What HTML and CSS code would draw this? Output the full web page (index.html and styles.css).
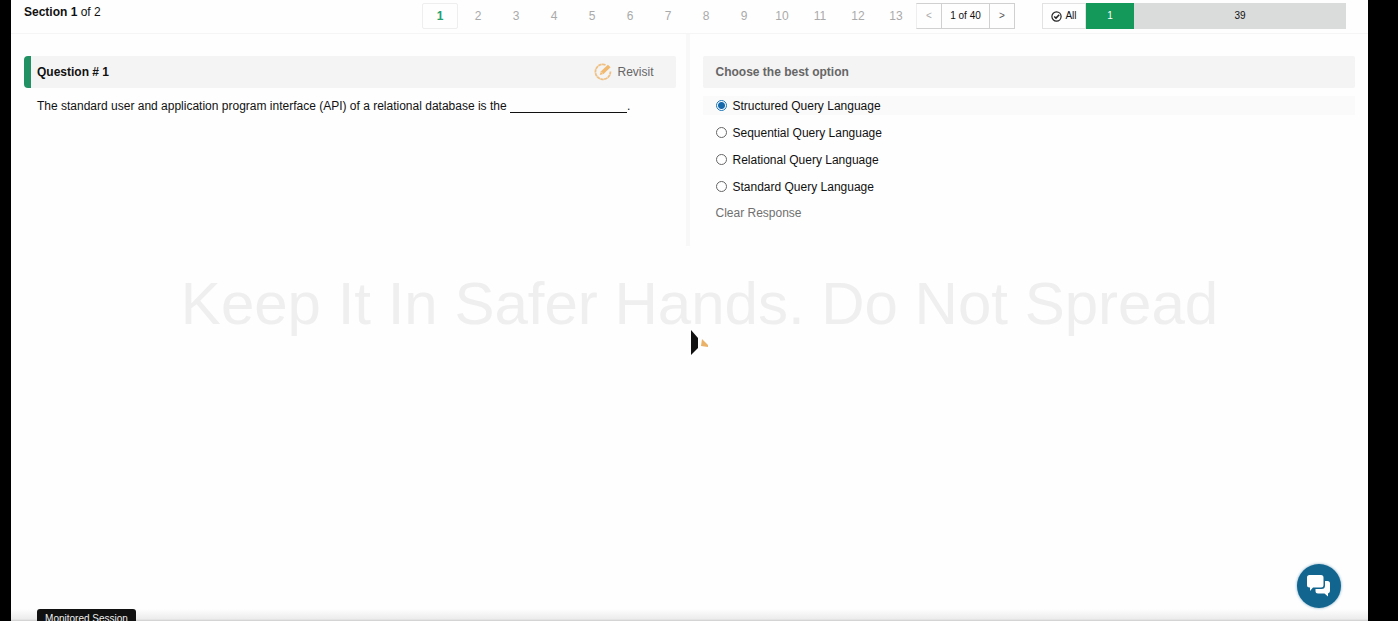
FILE: index.html
```html
<!DOCTYPE html>
<html lang="en">
<head>
<meta charset="utf-8">
<meta name="viewport" content="width=device-width, initial-scale=1">
<title>Section 1 of 2</title>
<link rel="stylesheet" href="styles.css">
</head>
<body>
<div class="page">
  <header class="topbar">
    <div class="section-name"><strong>Section 1</strong> of 2</div>
    <nav class="numbers" aria-label="Questions">
      <button class="number current" type="button">1</button>
      <button class="number" type="button">2</button>
      <button class="number" type="button">3</button>
      <button class="number" type="button">4</button>
      <button class="number" type="button">5</button>
      <button class="number" type="button">6</button>
      <button class="number" type="button">7</button>
      <button class="number" type="button">8</button>
      <button class="number" type="button">9</button>
      <button class="number" type="button">10</button>
      <button class="number" type="button">11</button>
      <button class="number" type="button">12</button>
      <button class="number" type="button">13</button>
    </nav>
    <div class="pager">
      <button class="step step-prev" type="button" aria-label="Previous">&lt;</button>
      <span class="position">1 of 40</span>
      <button class="step step-next" type="button" aria-label="Next">&gt;</button>
    </div>
    <div class="filters">
      <button class="filter filter-all" type="button">
        <svg width="11" height="11" viewBox="0 0 11 11" fill="none" stroke="#222" aria-hidden="true"><circle cx="5.5" cy="5.5" r="4.6" stroke-width="1.2"/><path d="M3.2 5.5 5 7.1 8.2 3.8" stroke-width="1.5"/></svg>
        All
      </button>
      <button class="filter filter-done" type="button">1</button>
      <button class="filter filter-left" type="button">39</button>
    </div>
  </header>

  <main class="columns">
    <section class="question">
      <div class="bar question-bar">
        <h2 class="heading">Question # 1</h2>
        <button class="revisit" type="button">
          <svg width="18" height="18" viewBox="0 0 18 18" fill="none" aria-hidden="true"><path d="M11.500 1.800A7.500 7.500 0 1 0 16.400 8.500" stroke="#efc083" stroke-width="1.800" stroke-dasharray="3.500 .4"/><path d="M5.700 11.900 7 8.200 13.900 1.700 16.600 4.300 9.500 10.900Z" fill="#f0b96f"/><path d="M7 8.800 9 10.700" stroke="#f8e4ca" stroke-width=".7"/></svg>
          Revisit
        </button>
      </div>
      <p class="prompt">The standard user and application program interface (API) of a relational database is the <span class="blank"></span>.</p>
    </section>
    <section class="answers">
      <div class="bar"><h2 class="heading heading-soft">Choose the best option</h2></div>
      <div class="options">
        <label class="option chosen"><input class="radio" type="radio" name="answer" checked>Structured Query Language</label>
        <label class="option"><input class="radio" type="radio" name="answer">Sequential Query Language</label>
        <label class="option"><input class="radio" type="radio" name="answer">Relational Query Language</label>
        <label class="option"><input class="radio" type="radio" name="answer">Standard Query Language</label>
        <button class="clear" type="button">Clear Response</button>
      </div>
    </section>
  </main>

  <div class="watermark">Keep It In Safer Hands. Do Not Spread</div>
  <svg class="pointer" width="20" height="26" viewBox="0 0 20 26" aria-hidden="true"><path d="M1 0 8 8V18L1 25Z" fill="#111"/><path d="M12 9 18 15V17L11 16Z" fill="#e9b268"/></svg>
  <button class="chat" type="button" aria-label="Chat">
    <svg width="26" height="24" viewBox="0 0 26 24" fill="#fff" aria-hidden="true"><path d="M3.5 1H15A2.5 2.5 0 0 1 17.500 3.500V11A2.500 2.500 0 0 1 15 13.500H7L4 17V13.500H3.500A2.500 2.500 0 0 1 1 11V3.500A2.500 2.500 0 0 1 3.500 1Z"/><path d="M19 7H21.500A2.500 2.500 0 0 1 24 9.500V17A2.500 2.500 0 0 1 22 19.400V22.500L18.500 19.500H12A2.500 2.500 0 0 1 9.500 17V15H15.500A3.500 3.500 0 0 0 19 11.500Z"/></svg>
  </button>
  <div class="monitor">Monitored Session</div>
</div>
</body>
</html>
```
FILE: styles.css
```css
* { box-sizing: border-box; }

body {
  margin: 0;
  background: #000;
  font-family: "Liberation Sans", Arial, sans-serif;
  font-size: 12px;
  line-height: 18px;
  color: #111;
}

button {
  margin: 0;
  padding: 0;
  border: 0;
  background: none;
  color: inherit;
  font: inherit;
}

.page {
  position: relative;
  height: 100vh;
  margin: 0 30px 0 11px;
  overflow: hidden;
  background: linear-gradient(to top, #ccc 0, #ececec 2px, #fefefe 12px);
}

.topbar {
  display: flex;
  align-items: flex-start;
  height: 34px;
  padding: 3px 22px 0 13px;
  border-bottom: 1px solid #f5f5f5;
}

.numbers {
  display: flex;
  gap: 2px;
  margin-left: auto;
}

.number {
  width: 36px;
  height: 26px;
  color: #aaa;
}

.current {
  border: 1px solid #eee;
  border-radius: 2px;
  color: #25a06c;
  font-weight: bold;
}

.pager {
  display: flex;
  width: 99px;
  height: 26px;
  margin-left: 2px;
  font-size: 10px;
  line-height: 24px;
  border: 1px solid #d0d0d0;
  border-left-color: #eee;
}

.step { width: 24px; color: #555; }
.step-prev { color: #aaa; }

.position {
  flex: 1;
  border: solid #d0d0d0;
  border-width: 0 1px;
  text-align: center;
}

.filters {
  display: flex;
  width: 304px;
  height: 26px;
  margin-left: 27px;
  font-size: 10px;
}

.filter-all {
  display: flex;
  align-items: center;
  justify-content: center;
  gap: 3px;
  width: 44px;
  border: 1px solid #e2e2e2;
}

.filter-done { width: 48px; background: #14995b; color: #fff; }
.filter-left { flex: 1; background: #dadbdb; }

.columns {
  display: grid;
  grid-template-columns: 1fr 1fr;
  height: 212px;
}

.question {
  padding: 22px 10px 0 13px;
  border-right: 4px solid #f8f8f8;
}

.question,
.answers { min-width: 0; }

.answers { padding: 22px 13px 0; }

.bar {
  display: flex;
  align-items: center;
  height: 32px;
  padding: 0 13px;
  border-radius: 2px;
  background: #f4f4f4;
}

.question-bar {
  padding: 0 22px 0 6px;
  border-left: 7px solid #219164;
  border-radius: 4px 2px 2px 4px;
}

.heading { margin: 0; font-size: 12px; }
.heading-soft { color: #666; }

.revisit {
  display: flex;
  align-items: center;
  gap: 5px;
  margin-left: auto;
  color: #666;
}

.prompt { margin: 9px 0 0; padding-left: 13px; }

.blank {
  display: inline-block;
  width: 117px;
  height: 12px;
  border-bottom: 1px solid #111;
  vertical-align: text-bottom;
}

.options {
  display: flex;
  flex-direction: column;
  align-items: stretch;
  gap: 8px;
  padding-top: 8px;
}

.option {
  display: flex;
  align-items: center;
  gap: 6px;
  height: 19px;
  padding-left: 13px;
}

.chosen { background: #fafafa; }

.radio {
  appearance: none;
  width: 11px;
  height: 11px;
  margin: 0;
  border: 1px solid #666;
  border-radius: 50%;
  background: #fff;
}

.radio:checked {
  border-color: #1874b9;
  background: radial-gradient(circle, #1469ad 3px, #fff 4px);
}

.clear {
  align-self: flex-start;
  margin-left: 13px;
  color: #707070;
}

.watermark {
  position: absolute;
  top: 269px;
  left: 0;
  right: 0;
  padding-left: 20px;
  font-size: 60px;
  line-height: 70px;
  text-align: center;
  white-space: nowrap;
  color: #efefef;
  pointer-events: none;
}

.pointer {
  position: absolute;
  top: 330px;
  left: 679px;
}

.chat {
  position: absolute;
  right: 27px;
  bottom: 13px;
  display: flex;
  align-items: center;
  justify-content: center;
  width: 44px;
  height: 44px;
  border-radius: 50%;
  background: #11658f;
  box-shadow: 0 0 3px #7ba9c0;
}

.monitor {
  position: absolute;
  left: 26px;
  bottom: -7px;
  width: 99px;
  height: 19px;
  border-radius: 3px 3px 0 0;
  background: #111;
  color: #eee;
  font-size: 10px;
  line-height: 20px;
  text-align: center;
}
```
